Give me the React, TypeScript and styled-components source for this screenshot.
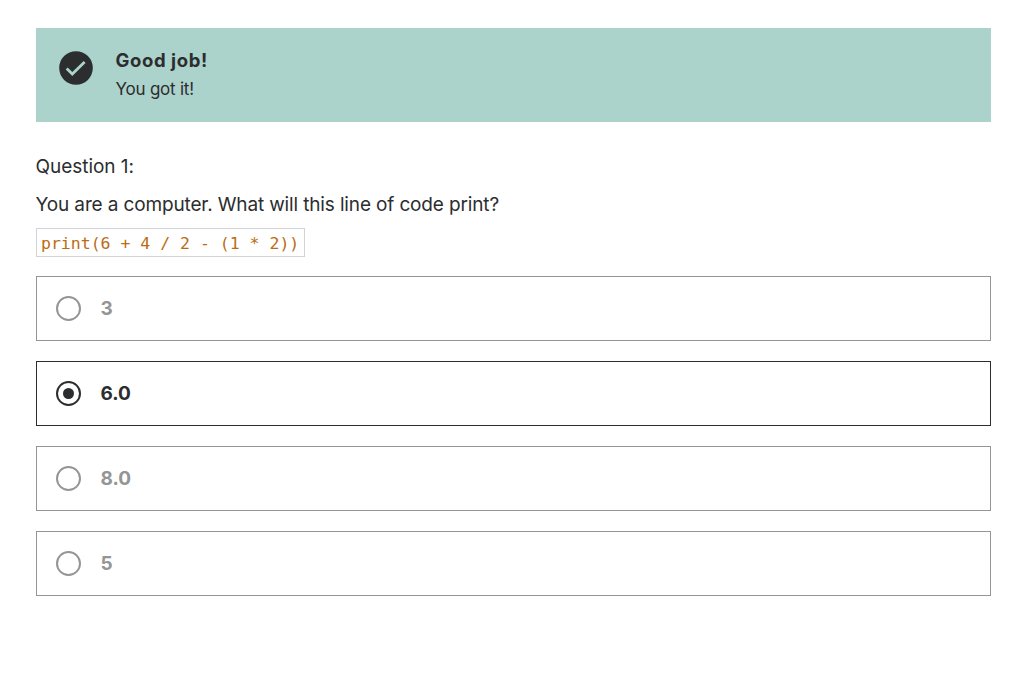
import React from "react";
import styled, { createGlobalStyle } from "styled-components";

const GlobalStyle = createGlobalStyle`
  * { box-sizing: border-box; }
  body {
    margin: 0;
    background: #fff;
    color: #2c2d2f;
    font-family: Inter, "Liberation Sans", sans-serif;
  }
`;

const Page = styled.main`
  padding: 28px 38px 0 36px;
`;

const Banner = styled.section`
  display: flex;
  height: 94px;
  padding: 18px 23px;
  background: #abd3cb;
`;

const BannerIcon = styled.svg`
  width: 34px;
  height: 34px;
  margin: 5px 22.5px 0 0;
`;

const BannerTitle = styled.div`
  font-size: 18.5px;
  line-height: 29px;
  font-weight: 750;
  letter-spacing: 0.6px;
`;

const BannerText = styled.div`
  font-size: 17px;
  line-height: 28px;
  letter-spacing: -0.22px;
`;

const Question = styled.section`
  margin-top: 31px;
  font-size: 19px;
  line-height: 28px;
`;

const Line = styled.p<{ $track: number }>`
  margin: 0 0 10px -0.5px;
  letter-spacing: ${(p) => p.$track}px;
  white-space: nowrap;
`;

const Code = styled.code`
  display: block;
  width: 269px;
  height: 29px;
  margin-top: -1px;
  padding: 0 4px;
  border: 1px solid #d0d4da;
  color: #ba6c12;
  font-family: "DejaVu Sans Mono", monospace;
  font-size: 16.5px;
  line-height: 30px;
  white-space: pre;
`;

const Options = styled.div`
  display: flex;
  flex-direction: column;
  gap: 20px;
  margin-top: 19px;
`;

const Option = styled.label<{ $selected: boolean }>`
  display: flex;
  align-items: center;
  gap: 19.5px;
  height: 65px;
  padding: 0 19px;
  border: 1px solid ${(p) => (p.$selected ? "#2c2d2f" : "#959595")};
  color: ${(p) => (p.$selected ? "#2c2d2f" : "#959595")};
  font-size: 19px;
  font-weight: 750;
`;

const Radio = styled.span`
  display: flex;
  align-items: center;
  justify-content: center;
  width: 25px;
  height: 25px;
  border: 2px solid currentColor;
  border-radius: 50%;
`;

const Dot = styled.span`
  width: 11px;
  height: 11px;
  border-radius: 50%;
  background: currentColor;
`;

const answers = ["3", "6.0", "8.0", "5"];

export default function App() {
  const selected = "6.0";
  return (
    <Page>
      <GlobalStyle />
      <Banner>
        <BannerIcon viewBox="0 0 34 34" fill="none">
          <circle cx="17" cy="17" r="16.8" fill="#2c2d2f" />
          <path d="M7.7 17.5l5.6 5.5L25.6 11" stroke="#abd3cb" strokeWidth="2.8" />
        </BannerIcon>
        <div>
          <BannerTitle>Good job!</BannerTitle>
          <BannerText>You got it!</BannerText>
        </div>
      </Banner>
      <Question>
        <Line $track={-0.04}>Question 1:</Line>
        <Line $track={-0.14}>You are a computer. What will this line of code print?</Line>
        <Code>print(6 + 4 / 2 - (1 * 2))</Code>
      </Question>
      <Options>
        {answers.map((answer) => (
          <Option key={answer} $selected={answer === selected}>
            <Radio>{answer === selected && <Dot />}</Radio>
            {answer}
          </Option>
        ))}
      </Options>
    </Page>
  );
}
